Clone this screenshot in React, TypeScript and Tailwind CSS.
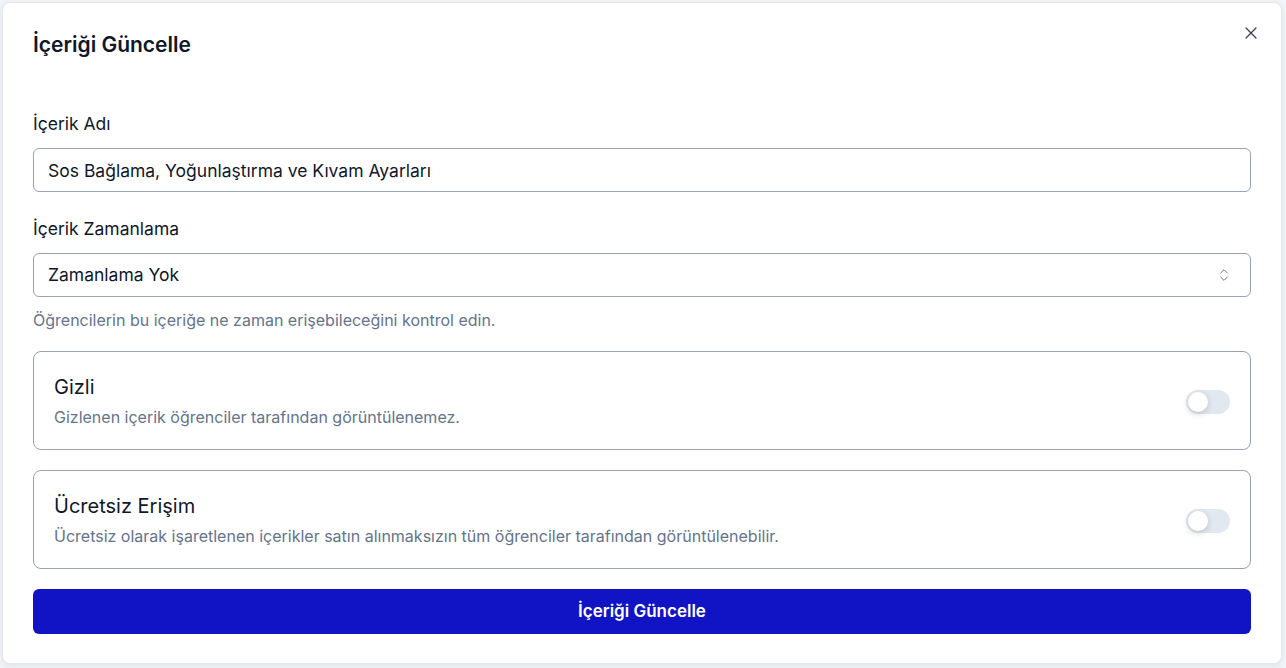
import { useState } from 'react';
import { X, ChevronsUpDown } from 'lucide-react';

function Toggle({ on, onChange }: { on: boolean; onChange: (v: boolean) => void }) {
    return (
        <button
            type="button"
            onClick={() => onChange(!on)}
            className={`relative inline-flex h-6 w-11 shrink-0 items-center rounded-full transition-colors ${on ? 'bg-[#1114c4]' : 'bg-[#e2e8f0]'}`}
        >
            <span
                className={`inline-block h-5 w-5 rounded-full bg-white shadow-[0_2px_6px_rgba(15,23,42,0.18)] transition-transform ${on ? 'translate-x-[22px]' : 'translate-x-[2px]'}`}
            />
        </button>
    );
}

function OptionCard({ title, desc, on, onChange }: { title: string; desc: string; on: boolean; onChange: (v: boolean) => void }) {
    return (
        <div className="flex items-center justify-between rounded-lg border border-[#94a3b8] px-5 pt-[21px] pb-[22px]">
            <div>
                <div className="text-[20px] leading-7 text-[#0f172a]">{title}</div>
                <div className="mt-[6px] text-base leading-5 text-[#64748b]">{desc}</div>
            </div>
            <div className="pt-2">
                <Toggle on={on} onChange={onChange} />
            </div>
        </div>
    );
}

export default function App() {
    const [name, setName] = useState('Sos Bağlama, Yoğunlaştırma ve Kıvam Ayarları');
    const [hidden, setHidden] = useState(false);
    const [free, setFree] = useState(false);

    return (
        <div className="h-screen bg-[#f1f5f9] pl-[2px] pr-[4px] pt-[2px] pb-[4px] font-['Inter','Noto_Sans',sans-serif]">
            <div className="relative h-full rounded-lg border border-[#e5e7eb] bg-white px-[30px] pt-[28px] shadow-[0_2px_6px_rgba(15,23,42,0.08)]">
                <button type="button" className="absolute right-[20px] top-[20px] text-[#374151]">
                    <X size={20} strokeWidth={1.5} />
                </button>

                <h2 className="text-[21px] font-semibold leading-7 text-[#0f172a]">İçeriği Güncelle</h2>

                <div className="mt-[53px]">
                    <label className="block text-[17.5px] leading-6 text-[#0f172a]">İçerik Adı</label>
                    <input
                        value={name}
                        onChange={(e) => setName(e.target.value)}
                        className="mt-3 block h-11 w-full rounded-md border border-[#94a3b8] px-[14px] text-[17.5px] text-[#0f172a] outline-none"
                    />
                </div>

                <div className="mt-[25px]">
                    <label className="block text-[17.5px] leading-6 text-[#0f172a]">İçerik Zamanlama</label>
                    <div className="mt-3 flex h-11 w-full items-center justify-between rounded-md border border-[#94a3b8] pl-[14px] pr-[18px]">
                        <span className="text-[17.5px] text-[#0f172a]">Zamanlama Yok</span>
                        <ChevronsUpDown size={16} strokeWidth={1.5} className="text-[#6b7280]" />
                    </div>
                    <p className="mt-[13px] text-base leading-5 text-[#64748b]">Öğrencilerin bu içeriğe ne zaman erişebileceğini kontrol edin.</p>
                </div>

                <div className="mt-[21px] flex flex-col gap-5">
                    <OptionCard
                        title="Gizli"
                        desc="Gizlenen içerik öğrenciler tarafından görüntülenemez."
                        on={hidden}
                        onChange={setHidden}
                    />
                    <OptionCard
                        title="Ücretsiz Erişim"
                        desc="Ücretsiz olarak işaretlenen içerikler satın alınmaksızın tüm öğrenciler tarafından görüntülenebilir."
                        on={free}
                        onChange={setFree}
                    />
                </div>

                <button
                    type="button"
                    className="mt-5 flex h-[45px] w-full items-center justify-center rounded-md bg-[#1114c4] text-[17px] font-semibold text-white"
                >
                    İçeriği Güncelle
                </button>
            </div>
        </div>
    );
}
